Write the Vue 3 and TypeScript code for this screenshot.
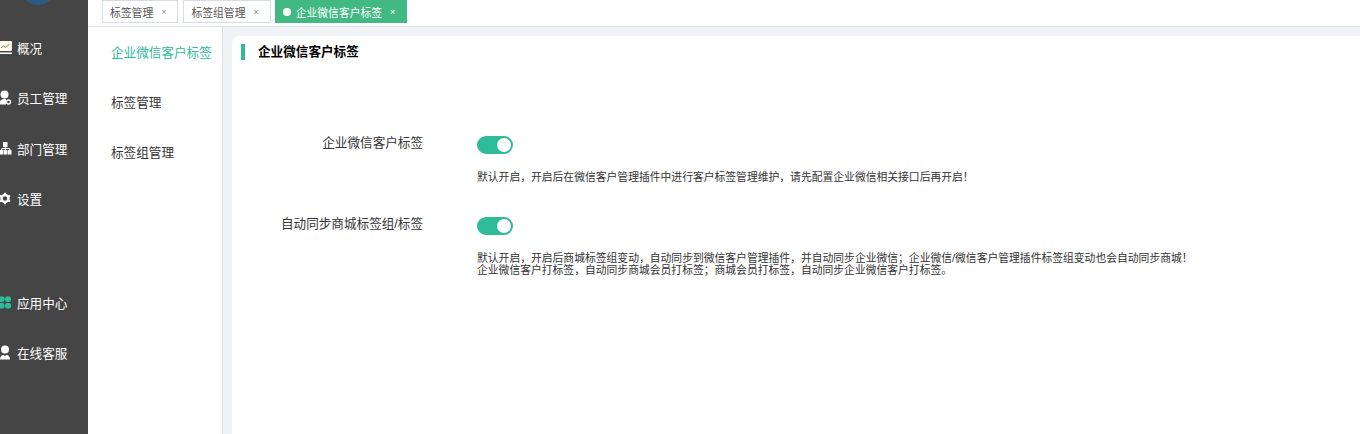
<script setup lang="ts">
interface NavItem {
  label: string
  icon: string
}

const topNav: NavItem[] = [
  { label: '概况', icon: 'chart' },
  { label: '员工管理', icon: 'staff' },
  { label: '部门管理', icon: 'org' },
  { label: '设置', icon: 'gear' }
]
const bottomNav: NavItem[] = [
  { label: '应用中心', icon: 'apps' },
  { label: '在线客服', icon: 'service' }
]
const tabs = [
  { label: '标签管理', active: false },
  { label: '标签组管理', active: false },
  { label: '企业微信客户标签', active: true }
]
const menu = ['企业微信客户标签', '标签管理', '标签组管理']
</script>

<template>
  <div class="page">
    <aside class="sidebar">
      <div class="avatar"></div>
      <nav class="nav top-nav">
        <a v-for="item in topNav" :key="item.label" class="nav-item">
          <svg class="nav-icon" viewBox="0 0 15 15">
            <template v-if="item.icon === 'chart'">
              <rect x="0" y="1" width="15" height="10" rx="1" fill="#fffbe8" />
              <path d="M4 8l2.500-2.200 2 1.500 4-3" fill="none" stroke="#888" stroke-width="1" />
              <rect x="0" y="12.500" width="15" height="1.500" fill="#fff" />
            </template>
            <template v-else-if="item.icon === 'staff'">
              <circle cx="7.500" cy="4.500" r="4" fill="#fff" />
              <path d="M3 14.500v-2.500c0-2 2-3 4-3h2v5.500z" fill="#fff" />
              <circle cx="11.500" cy="12" r="2" fill="#454545" stroke="#fff" stroke-width="1.400" />
            </template>
            <template v-else-if="item.icon === 'org'">
              <rect x="6" y="1" width="4.500" height="5" fill="#fff" />
              <rect x="3" y="9" width="3.500" height="4.500" fill="#fff" />
              <rect x="7" y="9" width="3.500" height="4.500" fill="#fff" />
              <rect x="11" y="9" width="3.500" height="4.500" fill="#fff" />
              <path d="M4.800 9V7.500h8V9M8.200 6v3" fill="none" stroke="#fff" stroke-width="1" />
            </template>
            <template v-else>
              <circle cx="8" cy="7.500" r="3.500" fill="none" stroke="#fff" stroke-width="2.400" />
              <path d="M8 1.800v2M8 11.200v2M3 4.600l1.800 1M11.200 9.400l1.800 1M3 10.400l1.800-1M11.200 5.600l1.800-1" stroke="#fff" stroke-width="2" />
            </template>
          </svg>
          <span>{{ item.label }}</span>
        </a>
      </nav>
      <nav class="nav bottom-nav">
        <a v-for="item in bottomNav" :key="item.label" class="nav-item">
          <svg class="nav-icon" viewBox="0 0 15 15">
            <template v-if="item.icon === 'apps'">
              <rect x="1" y="1.500" width="6.500" height="5.500" rx="2" fill="#2dbb9a" />
              <rect x="8" y="1.500" width="6" height="5.500" rx="2" fill="#2dbb9a" />
              <rect x="1" y="8" width="6.500" height="5.500" rx="2" fill="#2dbb9a" />
              <rect x="8" y="8" width="6" height="5.500" rx="2" fill="#2dbb9a" />
            </template>
            <template v-else>
              <circle cx="8" cy="4.500" r="4" fill="#fff" />
              <path d="M3 14.500c0-3 1.500-4.500 3.500-4.800l1.500 1.300 1.500-1.300c2 .3 3.500 1.800 3.500 4.800z" fill="#fff" />
            </template>
          </svg>
          <span>{{ item.label }}</span>
        </a>
      </nav>
    </aside>

    <div class="main">
      <header class="tabs">
        <div v-for="tab in tabs" :key="tab.label" class="tab" :class="{ active: tab.active }">
          <i v-if="tab.active" class="tab-dot"></i>
          <span>{{ tab.label }}</span>
          <span class="tab-close">×</span>
        </div>
      </header>

      <div class="body">
        <div class="side-menu">
          <a v-for="(m, i) in menu" :key="m" class="menu-item" :class="{ current: i === 0 }">{{ m }}</a>
        </div>

        <div class="content">
          <section class="card">
            <h2 class="card-title">企业微信客户标签</h2>

            <div class="form-row first">
              <label class="form-label">企业微信客户标签</label>
              <div class="form-field">
                <div class="switch"><i></i></div>
                <p class="hint">默认开启，开启后在微信客户管理插件中进行客户标签管理维护，请先配置企业微信相关接口后再开启！</p>
              </div>
            </div>

            <div class="form-row">
              <label class="form-label">自动同步商城标签组/标签</label>
              <div class="form-field">
                <div class="switch"><i></i></div>
                <p class="hint">
                  默认开启，开启后商城标签组变动，自动同步到微信客户管理插件，并自动同步企业微信；企业微信/微信客户管理插件标签组变动也会自动同步商城！<br />
                  企业微信客户打标签，自动同步商城会员打标签；商城会员打标签，自动同步企业微信客户打标签。
                </p>
              </div>
            </div>
          </section>
        </div>
      </div>
    </div>
  </div>
</template>

<style>
html, body {
  margin: 0;
  overflow: hidden;
}
</style>

<style scoped>
.page {
  display: flex;
  width: 1360px;
  height: 434px;
  overflow: hidden;
  font-family: "Liberation Sans", "Noto Sans CJK SC", sans-serif;
  color: #333;
  background: #fff;
}

.sidebar {
  width: 88px;
  flex: none;
  background: #454545;
  overflow: hidden;
}
.avatar {
  width: 36px;
  height: 36px;
  margin: -31px 0 0 20px;
  border-radius: 50%;
  background: #2c5a80;
}
.nav {
  display: flex;
  flex-direction: column;
}
.top-nav {
  margin-top: 17px;
}
.bottom-nav {
  margin-top: 53px;
}
.nav-item {
  display: flex;
  align-items: center;
  height: 50.500px;
  color: #fff;
  font-size: 12.600px;
}
.nav-icon {
  width: 15px;
  height: 15px;
  margin: 0 5px 0 -3px;
  flex: none;
}

.main {
  flex: 1;
  display: flex;
  flex-direction: column;
  min-width: 0;
}
.tabs {
  display: flex;
  gap: 5px;
  height: 23px;
  padding-left: 14px;
  border-bottom: 1px solid #dfe1e8;
  padding-bottom: 3px;
}
.tab {
  display: flex;
  align-items: center;
  box-sizing: border-box;
  height: 23px;
  padding: 0 11px 0 7px;
  border: 1px solid #d8dce5;
  font-size: 10.800px;
  color: #555;
  background: #fff;
}
.tab-close {
  margin-left: 8px;
  font-size: 9px;
  color: #888;
}
.tab.active {
  margin-left: -1px;
  background: #42b983;
  border-color: #42b983;
  color: #fff;
}
.tab.active .tab-close {
  color: #fff;
}
.tab-dot {
  width: 8px;
  height: 8px;
  margin-right: 5px;
  border-radius: 50%;
  background: #fff;
}

.body {
  flex: 1;
  display: flex;
  min-height: 0;
}
.side-menu {
  width: 134px;
  flex: none;
  display: flex;
  flex-direction: column;
  padding-top: 1px;
  border-right: 1px solid #dfe1e8;
}
.menu-item {
  height: 50px;
  line-height: 50px;
  padding-left: 23px;
  font-size: 12.600px;
  color: #333;
  white-space: nowrap;
}
.menu-item.current {
  color: #2dbb9a;
}

.content {
  flex: 1;
  min-width: 0;
  padding: 9px 0 0 9px;
  background: #f0f2f5;
}
.card {
  height: 100%;
  background: #fff;
  border-radius: 8px 0 0 0;
}
.card-title {
  margin: 0;
  position: relative;
  top: 8px;
  padding-left: 26px;
  height: 16px;
  line-height: 16px;
  font-size: 12.600px;
  font-weight: 700;
  color: #000;
}
.card-title::before {
  content: "";
  position: absolute;
  left: 9px;
  top: 0;
  width: 4px;
  height: 16px;
  background: #2dbb9a;
}

.form-row {
  display: flex;
}
.form-row.first {
  margin-top: 84px;
}
.form-label {
  width: 191px;
  flex: none;
  font-size: 12.600px;
  line-height: 14px;
  text-align: right;
  color: #333;
}
.form-field {
  margin-left: 54px;
  flex: 1;
  min-width: 0;
}
.form-row + .form-row {
  margin-top: 34px;
}
.switch {
  position: relative;
  width: 36px;
  height: 18px;
  border-radius: 9px;
  background: #2dbb9a;
}
.switch i {
  position: absolute;
  right: 2px;
  top: 2px;
  width: 14px;
  height: 14px;
  border-radius: 50%;
  background: #fff;
}
.hint {
  margin: 17px 0 0;
  font-size: 10.800px;
  line-height: 12px;
  color: #333;
  white-space: nowrap;
}
</style>
